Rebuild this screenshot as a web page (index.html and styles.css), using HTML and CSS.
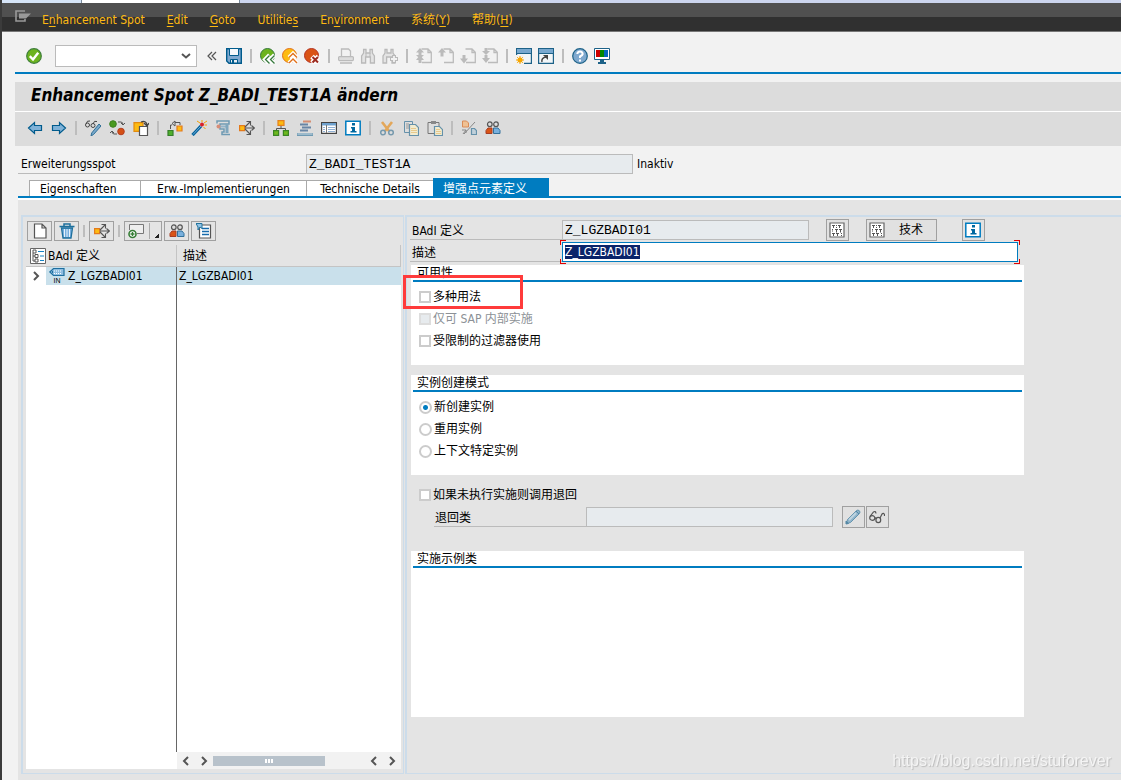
FILE: index.html
```html
<!DOCTYPE html>
<html lang="zh">
<head>
<meta charset="utf-8">
<title>Enhancement Spot Z_BADI_TEST1A ändern</title>
<link rel="stylesheet" href="styles.css">
</head>
<body>
<svg class="sprite" aria-hidden="true">
  <symbol id="ok" viewBox="0 0 16 16"><circle cx="8" cy="8" r="7.3" fill="#6cb31f" stroke="#3f7f3a" stroke-width="1.2"/><path d="M3.8 8.2 7 11.5 12.2 4.8" fill="none" stroke="#fff" stroke-width="2.4"/></symbol>
  <symbol id="save" viewBox="0 0 16 16"><path d="M.7.7h14.6v14.6H3L.7 13z" fill="#7fa9d0" stroke="#005b8c" stroke-width="1.4"/><path d="M3.500.5h9v7h-9z" fill="#f4f8fb" stroke="#005b8c"/><path d="M4.500 11.500h7V15h-7z" fill="#e8eef3" stroke="#005b8c"/><path d="M6 12h2v3H6z" fill="#005b8c"/></symbol>
  <symbol id="back" viewBox="0 0 16 16"><circle cx="7.500" cy="7.500" r="7" fill="#6cb31f" stroke="#35783c"/><path d="M9.500 7 5 11.500 9.500 16M14.500 7 10 11.500l4.500 4.500" fill="none" stroke="#fff" stroke-width="4"/><path d="M9.500 7.500l-4 4 4 4M14.500 7.500l-4 4 4 4" fill="none" stroke="#35783c" stroke-width="1.300"/></symbol>
  <symbol id="exit" viewBox="0 0 16 16"><circle cx="7.500" cy="7.500" r="7" fill="#fdbb12" stroke="#e0701a"/><path d="m7 9.500 4-4 4 4M7 15l4-4 4 4" fill="none" stroke="#fff" stroke-width="4"/><path d="m7 9.500 4-4 4 4M7 15l4-4 4 4" fill="none" stroke="#e0701a" stroke-width="1.400"/></symbol>
  <symbol id="cancel" viewBox="0 0 16 16"><circle cx="7.500" cy="7.500" r="7" fill="#da5416" stroke="#b53322"/><path d="m8 8.500 6.500 6.500M14.500 8.500 8 15" stroke="#fff" stroke-width="5"/><path d="m8.500 9 5.500 5.500M14 9l-5.500 5.500" stroke="#9d2b20" stroke-width="2"/></symbol>
  <symbol id="print" viewBox="0 0 16 16"><path d="M3.500 8V1h7l2 2v5" fill="#f2f2f2" stroke="#bbb" stroke-width="1.300"/><rect x=".6" y="8.600" width="14.800" height="4" rx="1" fill="#ddd" stroke="#bbb" stroke-width="1.200"/><path d="M2 15h12" stroke="#bbb" stroke-width="1.600"/></symbol>
  <symbol id="find" viewBox="0 0 16 16"><path d="M1.600 15V8l2-3V1.500H6V5h4V1.500h2.400V5l2 3v7h-4V9H5.600v6z" fill="#e4e4e4" stroke="#b9b9b9" stroke-width="1.300"/><path d="M6 5v4m4-4v4" stroke="#b9b9b9"/></symbol>
  <symbol id="findnext" viewBox="0 0 16 16"><path d="M1 15V8l2-3V1.500h2V5h4V1.500h2V5l2 3v7h-3V9H4.600v6z" fill="#e4e4e4" stroke="#b9b9b9" stroke-width="1.300"/><path d="M12 7v8M8 11h8" stroke="#b9b9b9" stroke-width="4"/><path d="M12 8v6M9 11h6" stroke="#f2f2f2" stroke-width="1.800"/></symbol>
  <symbol id="page" viewBox="0 0 16 16"><path d="M5.500 1H12l3.300 3.300v10.200H6M12 1v3.500h3" fill="none" stroke="#bbb" stroke-width="1.300"/></symbol>
  <symbol id="first" viewBox="0 0 16 16"><use href="#page"/><path d="m4 0 4 4.500H5.500V7H8l-4 4-4-4h2.500V4.500H0zM4 7l4 5H5.500v3h-3v-3H0z" fill="#bbb"/></symbol>
  <symbol id="prev" viewBox="0 0 16 16"><use href="#page"/><path d="m4 0 4 4.500H5.500v4h-3v-4H0z" fill="#bbb"/></symbol>
  <symbol id="next" viewBox="0 0 16 16"><use href="#page"/><path d="m4 15.500 4-5H5.500V7h-3v3.500H0z" fill="#bbb"/></symbol>
  <symbol id="last" viewBox="0 0 16 16"><use href="#page"/><path d="m4 7 4-4H5.500V0h-3v3H0zM4 15l4-5H5.500V7h-3v3H0z" fill="#bbb"/></symbol>
  <symbol id="session" viewBox="0 0 16 16"><path d="M.6.6h14.800v14.800H.6z" fill="#f2f6f8" stroke="#1d6288" stroke-width="1.200"/><path d="M1 1h14v4H1z" fill="#78a8cf"/><path d="M0 5.500h16" stroke="#1d6288"/><path d="M0 7h8v9H0z" fill="#f2f2f2"/><circle cx="4" cy="12" r="2.500" fill="#f7a600"/><path d="M4 8v8M0 12h8M1.200 9.200l5.600 5.600M6.800 9.200l-5.600 5.600" stroke="#f7a600"/></symbol>
  <symbol id="shortcut" viewBox="0 0 16 16"><path d="M.6.6h14.800v14.800H.6z" fill="#f2f6f8" stroke="#1d6288" stroke-width="1.200"/><path d="M1 1h14v4H1z" fill="#78a8cf"/><path d="M0 5.500h16" stroke="#1d6288"/><path d="M4 14q-1-4 4-5" fill="none" stroke="#444" stroke-width="1.500"/><path d="M5 7h5v5z" fill="#444"/></symbol>
  <symbol id="help" viewBox="0 0 16 16"><circle cx="8" cy="8" r="7.300" fill="#7fa9cf" stroke="#1d6288" stroke-width="1.200"/><path d="M5.300 6q.2-2.600 2.700-2.600T10.700 6Q10.500 7.300 8 8.500V10" fill="none" stroke="#fff" stroke-width="2"/><path d="M7 11.500h2v2H7z" fill="#fff"/></symbol>
  <symbol id="monitor" viewBox="0 0 16 16"><path d="M.5.500h15v11H.5z" fill="#fff" stroke="#1d6288"/><path d="M2 2h4v7H2z" fill="#c00"/><path d="M6 2h4v7H6z" fill="#080"/><path d="M10 2h4v7h-4z" fill="#06b"/><path d="M6 12h4v2h2v2H4v-2h2z" fill="#1d6288"/></symbol>
  <symbol id="left" viewBox="0 0 16 16"><path d="m1.500 8 6-5.500v3h7v5h-7v3z" fill="#7fb2d8" stroke="#005b8c" stroke-width="1.200"/></symbol>
  <symbol id="right" viewBox="0 0 16 16"><path d="m14.500 8-6-5.500v3h-7v5h7v3z" fill="#7fb2d8" stroke="#005b8c" stroke-width="1.200"/></symbol>
  <symbol id="toggle" viewBox="0 0 16 16"><circle cx="2.500" cy="5" r="2" fill="none" stroke="#444"/><circle cx="8" cy="5.500" r="2" fill="none" stroke="#444"/><path d="M1 4Q2 0 5 1m3 3q1-4 4-2.500" fill="none" stroke="#444"/><path d="m14 4 2 2-7.500 8.500L6 16l.7-3z" fill="#7aa9cb" stroke="#2f6f96"/></symbol>
  <symbol id="activate" viewBox="0 0 16 16"><circle cx="4" cy="4" r="3.300" fill="#4a9a20" stroke="#3d8020"/><circle cx="12" cy="11.500" r="3.300" fill="#d45015" stroke="#b43f22"/><path d="M9 2h3q2 0 2 3m-2-2 2 2 2-2M8 14H5q-2 0-2-3M1 13l2-2 2 2" fill="none" stroke="#555"/></symbol>
  <symbol id="other" viewBox="0 0 16 16"><path d="M1 2.600h9v8.800H1z" fill="#fdbb12" stroke="#e28a10" stroke-width="1.200"/><path d="M6.500 6.500h8v9h-8z" fill="#fff" stroke="#555" stroke-width="1.200"/><path d="M8 2q5-2 6 3m-3-2 3 3 2-3" fill="none" stroke="#444" stroke-width="1.300"/></symbol>
  <symbol id="where" viewBox="0 0 16 16"><path d="M1 10.500h5v5H1z" fill="#4faf2c" stroke="#357d2a" stroke-width="1.200"/><path d="M10 6h5v5h-5z" fill="#fdbb12" stroke="#e37a1c" stroke-width="1.200"/><path d="M3.500 9V5H5M8 2.500h5V5M5 3.500 8 1v5z" fill="none" stroke="#555"/></symbol>
  <symbol id="wand" viewBox="0 0 16 16"><path d="M1.500 15 10 6" stroke="#00609a" stroke-width="3.200"/><path d="m2 14.500 8-8.500" stroke="#79b0d8"/><circle cx="11" cy="4.500" r="2" fill="#d9222a"/><path d="M11 0v2M13 3l3-2M13.500 5H16M12.500 7l2 2M6 1l3 2" stroke="#f6a000"/></symbol>
  <symbol id="pattern" viewBox="0 0 16 16"><path d="M2 3.500V1h12v3H5v5h4v3H7v2.500h8" fill="none" stroke="#6f9ab3" stroke-width="1.500"/><path d="M5 6.500h7" stroke="#92b4c8" stroke-width="2"/><path d="M12 4v9" stroke="#7fa6bd" stroke-width="3"/><circle cx="3.500" cy="6.500" r="2" fill="#d68d78"/></symbol>
  <symbol id="expand" viewBox="0 0 16 16"><path d="M.6 5.600h5v5h-5z" fill="#fdbb12" stroke="#e37a1c" stroke-width="1.200"/><path d="M6 8h9M6 7l5-5M6 9l5 5M12.500 5.500 15.500 8l-3 2.500M7.500 1.500h4v4M7.500 14.500h4v-4" fill="none" stroke="#555" stroke-width="1.100"/></symbol>
  <symbol id="hier" viewBox="0 0 16 16"><path d="M8 6v3M3.500 11V8.500h9V11" fill="none" stroke="#555"/><path d="M5 .6h6v4.800H5z" fill="#fdbb12" stroke="#e5801c" stroke-width="1.200"/><path d="M.6 10.600h5v4.800h-5zM10.400 10.600h5v4.800h-5z" fill="#6eb91e" stroke="#3b8525" stroke-width="1.200"/></symbol>
  <symbol id="stack" viewBox="0 0 16 16"><path d="M6 1.500h8" stroke="#d58e72" stroke-width="2"/><path d="M3 4.500h8M5 7.500h9M3 10.500h8" stroke="#6885a5" stroke-width="2"/><path d="M0 13v2.500h16V13" fill="#9dbacb" stroke="#6f9ab3"/></symbol>
  <symbol id="list" viewBox="0 0 16 16"><path d="M.6 2.600h14.800v10.800H.6z" fill="#fff" stroke="#444" stroke-width="1.200"/><path d="M1 3h14v2.500H1z" fill="#6ea1ce"/><path d="M5.500 5v8" stroke="#777"/><path d="M2 7.500h2m-2 2h2m-2 2h2M7 7.500h7m-7 2h7m-7 2h7" stroke="#8fb0d4"/></symbol>
  <symbol id="info" viewBox="0 0 16 16"><path d="M.8 1.300h14.400v13.400H.8z" fill="#fff" stroke="#007cc0" stroke-width="1.500"/><path d="M7 3h3v2.500H7zM6 7h4v4h1.500v1.600h-6V11H7V8.500H6z" fill="#00689f"/></symbol>
  <symbol id="cut" viewBox="0 0 16 16"><path d="m3 2 7 9M13 2l-7 9" stroke="#e3a75a" stroke-width="2.600"/><circle cx="4" cy="12.500" r="2.300" fill="none" stroke="#7699ad" stroke-width="1.500"/><circle cx="12" cy="12.500" r="2.300" fill="none" stroke="#7699ad" stroke-width="1.500"/></symbol>
  <symbol id="copy" viewBox="0 0 16 16"><path d="M1.500 1.500h8v11h-8z" fill="#ddd" stroke="#6591aa"/><path d="M3 4h3M3 6h3M3 8h3" stroke="#999"/><path d="M6.500 4.500h6l3 3v8h-9z" fill="#f2ecd0" stroke="#6591aa" stroke-width="1.200"/><path d="M8 8.500h5m-5 2h6m-6 2h6" stroke="#e8c98c"/></symbol>
  <symbol id="paste" viewBox="0 0 16 16"><path d="M1 2.500h11v11H1z" fill="#ddd" stroke="#777"/><path d="M4 1h5v3H4z" fill="#888"/><path d="M7.500 6.500h5l3 3v6h-8z" fill="#f2ecd0" stroke="#6591aa" stroke-width="1.200"/><path d="M9 9.500h4m-4 2h5m-5 2h5" stroke="#e8c98c"/></symbol>
  <symbol id="switch" viewBox="0 0 16 16"><path d="M1.500 1h4l2 2v4h-6z" fill="#efc194" stroke="#d98b58"/><path d="M10.500 8.500h3l2 2v4h-5z" fill="#c0d0da" stroke="#6591aa" stroke-width="1.200"/><path d="M14 2 3 14M1 10h4v3M2 14l3-4" fill="none" stroke="#888"/></symbol>
  <symbol id="people" viewBox="0 0 16 16"><path d="M1 13.500V10.500L3 8h4v5.500z" fill="#da5416" stroke="#a63d23"/><path d="M8.500 13.500V8H13l2 2.500v3z" fill="#79b0dd" stroke="#32719b"/><circle cx="4.800" cy="4.200" r="2.300" fill="#ddd" stroke="#555" stroke-width="1.200"/><circle cx="11" cy="4.200" r="2.300" fill="#ddd" stroke="#555" stroke-width="1.200"/></symbol>
  <symbol id="new" viewBox="0 0 16 16"><path d="M2.500 1h7.500l4 4v10H2.500zM10 1v4h4" fill="#fff" stroke="#555" stroke-width="1.200"/></symbol>
  <symbol id="trash" viewBox="0 0 16 16"><path d="M2.500 5h11l-1.500 10H4z" fill="#75aede" stroke="#1d6f9c" stroke-width="1.300"/><path d="M.5 3.500h15M5 3V1h6v2" fill="none" stroke="#1d6f9c" stroke-width="1.500"/><path d="M5.500 6v8M8 6v8m2.500-8v8" stroke="#e6f2fa"/></symbol>
  <symbol id="add" viewBox="0 0 16 16"><path d="M1.500 7V1.500h14v9H9" fill="#eee" stroke="#777"/><circle cx="4.500" cy="11" r="3.500" fill="#fff" stroke="#357d35" stroke-width="1.600"/><path d="M4.500 9v4m-2-2h4" stroke="#357d35" stroke-width="1.400"/></symbol>
  <symbol id="note" viewBox="0 0 16 16"><path d="M3.500 2h11v13h-11z" fill="#fff" stroke="#555" stroke-width="1.200"/><path d="M6 5.500h7m-7 3h7m-7 3h7" stroke="#176bab" stroke-width="1.500"/><path d="M0 .5h6v5L4 4 2 7V4z" fill="#91c3e5" stroke="#23739d"/></symbol>
  <symbol id="tree" viewBox="0 0 16 16"><path d="M.5.500h15v15H.5z" fill="#fff" stroke="#666"/><path d="M3 2h3v3H3zM5 6.500h3v3H5zM5 11h3v3H5zM3 5v8h2M3 8h2" fill="none" stroke="#555"/><path d="M8 3.500h6M10 8h4m-4 4.500h4" stroke="#1683c5"/></symbol>
  <symbol id="tag" viewBox="0 0 16 10"><path d="M.8 5 4.500 1.500H15v7H4.500z" fill="#8ebde0" stroke="#1e6f9f" stroke-width="1.200"/><path d="M5 4h8m-8 2.500h8" stroke="#fff" stroke-dasharray="1 1"/><path d="M3.500 6V4" stroke="#1e6f9f"/></symbol>
  <symbol id="tech" viewBox="0 0 16 16"><path d="M1 1h14v14H1z" fill="#fff" stroke="#666" stroke-width="1.200"/><path d="M3 3.500h3m1 0h1m1 0h3M4.500 3v3m3-1v1M10.500 3v3M3 7.500h1m2 0h3m1 0h3M3.500 8.500v1m4-2v3m4-3v3M3 11.500h3m1 0h3m2 0h1M4.500 12v2m4-2v2m4-1v1" stroke="#555"/></symbol>
  <symbol id="pencil" viewBox="0 0 16 16"><path d="m1.500 14.500 1-4 9-9q1.500-1 2.800.2t.2 2.800l-9 9z" fill="#8fb4cb" stroke="#6594ae"/><path d="m4 11 7-7" stroke="#bfd4e0" stroke-width="2"/><path d="M1 15v-3l2.500 2.500zM11 2l3 3" fill="#5588a5" stroke="#5588a5"/></symbol>
  <symbol id="glasses" viewBox="0 0 16 16"><ellipse cx="3.300" cy="9" rx="2.600" ry="2.300" fill="none" stroke="#555" stroke-width="1.200"/><ellipse cx="9.300" cy="11" rx="2.400" ry="2.600" fill="none" stroke="#555" stroke-width="1.200"/><path d="M5.500 9q1-.5 2 1M1 7.500 4.500 3q2-1.500 2.500 1.500M11 9l2-4q1.500-1.500 2.500.500v1.500" fill="none" stroke="#555" stroke-width="1.200"/></symbol>
  <symbol id="lt" viewBox="0 0 8 10"><path d="M6 1 2 5l4 4" fill="none" stroke="#555" stroke-width="2"/></symbol>
  <symbol id="gt" viewBox="0 0 8 10"><path d="m2 1 4 4-4 4" fill="none" stroke="#555" stroke-width="2"/></symbol>
</svg>

<div class="window-edge"><span></span><span></span></div>
<nav class="menu">
  <button class="menu-icon" aria-label="Menu"><svg viewBox="0 0 16 12"><path d="M10 1H1v10h9V9" fill="none" stroke="#999" stroke-width="1.600"/><path d="M4 3.500h12l-5 5H4z" fill="#999"/></svg></button>
  <button>E<u>n</u>hancement Spot</button>
  <button><u>E</u>dit</button>
  <button><u>G</u>oto</button>
  <button>Utilitie<u>s</u></button>
  <button>En<u>v</u>ironment</button>
  <button>系统(<u>Y</u>)</button>
  <button>帮助(<u>H</u>)</button>
</nav>

<div class="app">
  <div class="toolbar main-bar">
    <button class="ok" aria-label="OK"><svg><use href="#ok"/></svg></button>
    <div class="command">
      <select aria-label="Command"><option></option></select>
      <svg viewBox="0 0 10 6"><path d="m1 1 4 3.500L9 1" fill="none" stroke="#555" stroke-width="2"/></svg>
    </div>
    <button class="collapse" aria-label="Collapse"><svg viewBox="0 0 10 10"><path d="M5 1 1 5l4 4M9 1 5 5l4 4" fill="none" stroke="#555" stroke-width="1.200"/></svg></button>
    <button aria-label="Save"><svg><use href="#save"/></svg></button>
    <i class="sep"></i>
    <button aria-label="Back"><svg><use href="#back"/></svg></button>
    <button aria-label="Exit"><svg><use href="#exit"/></svg></button>
    <button aria-label="Cancel"><svg><use href="#cancel"/></svg></button>
    <i class="sep"></i>
    <button aria-label="Print"><svg><use href="#print"/></svg></button>
    <button aria-label="Find"><svg><use href="#find"/></svg></button>
    <button aria-label="Find next"><svg><use href="#findnext"/></svg></button>
    <i class="sep"></i>
    <button aria-label="First page"><svg><use href="#first"/></svg></button>
    <button aria-label="Previous page"><svg><use href="#prev"/></svg></button>
    <button aria-label="Next page"><svg><use href="#next"/></svg></button>
    <button aria-label="Last page"><svg><use href="#last"/></svg></button>
    <i class="sep"></i>
    <button aria-label="New session"><svg><use href="#session"/></svg></button>
    <button aria-label="Shortcut"><svg><use href="#shortcut"/></svg></button>
    <i class="sep"></i>
    <button aria-label="Help"><svg><use href="#help"/></svg></button>
    <button aria-label="Layout"><svg><use href="#monitor"/></svg></button>
  </div>

  <h1>Enhancement Spot Z_BADI_TEST1A ändern</h1>

  <div class="toolbar app-bar">
    <button aria-label="Previous object"><svg><use href="#left"/></svg></button>
    <button aria-label="Next object"><svg><use href="#right"/></svg></button>
    <i class="sep"></i>
    <button aria-label="Display/Change"><svg><use href="#toggle"/></svg></button>
    <button aria-label="Active/Inactive"><svg><use href="#activate"/></svg></button>
    <button aria-label="Other object"><svg><use href="#other"/></svg></button>
    <i class="sep"></i>
    <button aria-label="Check"><svg><use href="#where"/></svg></button>
    <button aria-label="Activate"><svg><use href="#wand"/></svg></button>
    <button aria-label="Test"><svg><use href="#pattern"/></svg></button>
    <button aria-label="Where-used list"><svg><use href="#expand"/></svg></button>
    <i class="sep"></i>
    <button aria-label="Object list"><svg><use href="#hier"/></svg></button>
    <button aria-label="Navigation window"><svg><use href="#stack"/></svg></button>
    <button aria-label="Full screen"><svg><use href="#list"/></svg></button>
    <button aria-label="Information"><svg><use href="#info"/></svg></button>
    <i class="sep"></i>
    <button aria-label="Cut"><svg><use href="#cut"/></svg></button>
    <button aria-label="Copy"><svg><use href="#copy"/></svg></button>
    <button aria-label="Paste"><svg><use href="#paste"/></svg></button>
    <i class="sep"></i>
    <button aria-label="Switch"><svg><use href="#switch"/></svg></button>
    <button aria-label="Users"><svg><use href="#people"/></svg></button>
  </div>

  <main>
    <div class="field spot">
      <label for="spot">Erweiterungsspot</label>
      <input id="spot" class="mono" value="Z_BADI_TEST1A" readonly>
      <span class="status">Inaktiv</span>
    </div>

    <div class="tabs" role="tablist">
      <button role="tab">Eigenschaften</button>
      <button role="tab">Erw.-Implementierungen</button>
      <button role="tab">Technische Details</button>
      <button role="tab" class="active" aria-selected="true">增强点元素定义</button>
    </div>

    <div class="body">
      <section class="left">
        <div class="buttons">
          <button aria-label="Create"><svg><use href="#new"/></svg></button>
          <button aria-label="Delete"><svg><use href="#trash"/></svg></button>
          <i class="sep"></i>
          <button aria-label="Where used"><svg><use href="#expand"/></svg></button>
          <i class="sep"></i>
          <button class="split" aria-label="Add"><svg><use href="#add"/></svg><i class="corner"></i></button>
          <button aria-label="Users"><svg><use href="#people"/></svg></button>
          <button aria-label="Documentation"><svg><use href="#note"/></svg></button>
        </div>
        <table>
          <thead><tr>
            <th class="c1"><div class="cell"><svg><use href="#tree"/></svg>BAdI 定义</div></th>
            <th>描述</th>
          </tr></thead>
          <tbody><tr>
            <td class="c1"><div class="cell"><button class="expander" aria-label="Expand"><svg><use href="#gt"/></svg></button><span class="node"><span class="tag"><svg><use href="#tag"/></svg><small>IN</small></span>Z_LGZBADI01</span></div></td>
            <td>Z_LGZBADI01</td>
          </tr></tbody>
        </table>
        <div class="blank"></div>
        <div class="scroll">
          <button aria-label="Left"><svg><use href="#lt"/></svg></button>
          <button aria-label="Right"><svg><use href="#gt"/></svg></button>
          <div class="thumb"><i></i><i></i><i></i></div>
          <button aria-label="Left"><svg><use href="#lt"/></svg></button>
          <button aria-label="Right"><svg><use href="#gt"/></svg></button>
        </div>
      </section>

      <section class="right">
        <div class="row">
          <div class="field"><label for="badi">BAdI 定义</label><input id="badi" class="mono" value="Z_LGZBADI01" readonly></div>
          <div class="row-actions">
            <button class="box" aria-label="Technical"><svg><use href="#tech"/></svg></button>
            <button class="box wide"><svg><use href="#tech"/></svg><span>技术</span></button>
            <button class="box" aria-label="Information"><svg><use href="#info"/></svg></button>
          </div>
        </div>
        <div class="field desc"><label for="desc">描述</label><div class="focus"><input id="desc" value="Z_LGZBADI01"><i></i><i></i><i></i><i></i></div></div>

        <fieldset class="usage">
          <legend>可用性</legend>
          <label><input type="checkbox">多种用法</label>
          <label class="off"><input type="checkbox" disabled>仅可 SAP 内部实施</label>
          <label><input type="checkbox">受限制的过滤器使用</label>
          <div class="mark"></div>
        </fieldset>

        <fieldset class="mode">
          <legend>实例创建模式</legend>
          <label><input type="radio" name="mode" checked>新创建实例</label>
          <label><input type="radio" name="mode">重用实例</label>
          <label><input type="radio" name="mode">上下文特定实例</label>
        </fieldset>

        <div class="fallback">
          <label class="check"><input type="checkbox">如果未执行实施则调用退回</label>
          <div class="row">
            <div class="field"><label for="fb">退回类</label><input id="fb" readonly></div>
            <div class="pair">
              <button class="box" aria-label="Edit"><svg><use href="#pencil"/></svg></button>
              <button class="box" aria-label="Display"><svg><use href="#glasses"/></svg></button>
            </div>
          </div>
        </div>

        <fieldset class="samples">
          <legend>实施示例类</legend>
        </fieldset>
      </section>
    </div>
  </main>
</div>
<div class="watermark">https://blog.csdn.net/stuforever</div>
<script src="main.js"></script>
</body>
</html>
```
FILE: main.js
```js
const desc = document.getElementById('desc');
desc.focus({ preventScroll: true });
desc.select();
```
FILE: styles.css
```css
* { box-sizing: border-box; }
body {
  margin: 0;
  min-height: 100vh;
  display: flex;
  flex-direction: column;
  border-left: 2px solid #3b3b3b;
  background: #f2f2f2;
  color: #000;
  font: 12px/18px "DejaVu Sans Condensed", "Noto Sans CJK SC", sans-serif;
}
button, input, select { font: inherit; color: inherit; margin: 0; padding: 0; border: 0; border-radius: 0; }
button { background: none; }
svg { display: block; width: 16px; height: 16px; flex: none; }
.sprite { position: absolute; width: 0; height: 0; }

.window-edge { display: flex; height: 3px; background: #ccd5ee; }
.window-edge span { width: 80px; background: #d5e4f7; border-right: 1px solid #789; }
.window-edge span + span { width: 158px; background: #fff; }

.menu {
  display: flex;
  gap: 22px;
  height: 29px;
  padding: 0 13px;
  align-items: center;
  background: linear-gradient(#505050 0 14px, #303030 14px 28px, #777 28px);
  color: #fdb913;
}
.menu button { line-height: 27px; padding-top: 6px; }
.menu .menu-icon { width: 16px; height: 29px; padding: 7px 0 0; margin-right: -11px; }
.menu .menu-icon svg { width: 16px; height: 12px; }
.menu .menu-icon { display: flex; align-items: flex-start; }
.menu u { text-underline-offset: 2px; }

.app { flex: 1; display: flex; flex-direction: column; padding-left: 13px; }
.toolbar { display: flex; align-items: center; }
.toolbar button { width: 16px; height: 16px; }
.sep { width: 2px; height: 14px; background: #bdbdbd; }
.main-bar { gap: 6px; height: 42px; padding: 8px 0 0 11px; border-bottom: 2px solid #007cc0; }
.main-bar .sep { margin: 0 2px; }
.main-bar .ok { margin-right: 7px; }
.command { position: relative; width: 142px; height: 22px; }
.command select { appearance: none; display: block; width: 100%; height: 100%; border: 1px solid #bbb; background: #fff; }
.command svg { position: absolute; right: 6px; top: 8px; width: 10px; height: 6px; pointer-events: none; }
.main-bar .collapse { width: 10px; margin: 0 3px 0 4px; }
.collapse svg { width: 10px; }

h1 {
  margin: 8px 0 1px;
  height: 29px;
  padding-left: 16px;
  background: #dcdcdc;
  font-size: 17px;
  line-height: 27px;
  font-style: italic;
  font-weight: bold;
}
.app-bar { gap: 8px; height: 34px; padding: 0 12px 2px; background: #dcdcdc; box-shadow: 0 -1px #fff; }

main { flex: 1; display: flex; flex-direction: column; padding: 8px 0 0 3px; }
.field { display: flex; height: 20px; }
.field > label { border-bottom: 1px solid #bbb; line-height: 21px; }
.field input { border: 1px solid #bbb; background: #e7ebee; height: 20px; padding: 0 2px; outline: 0; min-width: 0; }
.field .mono { font: 13px "Liberation Mono", monospace; }
.spot label { width: 288px; padding-left: 3px; }
.spot input { width: 327px; }
.status { line-height: 21px; padding-left: 4px; }

.tabs { display: flex; align-items: flex-end; margin-top: 4px; height: 20px; padding-left: 11px; border-bottom: 2px solid #007cc0; }
.tabs button { height: 16px; line-height: 16px; background: #fff; border: 1px solid #aaa; border-width: 1px 0 0 1px; padding: 0 11px; }
.tabs button:first-child { width: 111px; text-align: left; padding: 0 10px; }
.tabs button:nth-child(2) { width: 166px; }
.tabs button:nth-child(3) { width: 127px; }
.tabs .active { width: 116px; height: 18px; line-height: 18px; background: #007cc0; border: 0; color: #fff; text-align: left; padding: 2px 10px 0; }

.body { flex: 1; display: flex; background: #e4e4e4; border-top: 2px solid #fff; padding: 15px 0 6px 3px; }
.left { width: 383px; flex: none; display: flex; flex-direction: column; border: solid #ccdcea; border-width: 2px 1px 1px 2px; padding: 4px 2px 4px 3px; }
.right { flex: 1; min-width: 0; border: solid #ccdcea; border-width: 2px 0 1px 2px; margin-left: 1px; padding: 2px 0 0 3px; }

.buttons { display: flex; gap: 2px; padding-left: 1px; align-items: center; }
.buttons button { width: 25px; height: 20px; border: 1px solid #a0a0a0; display: flex; align-items: center; justify-content: center; }
.buttons .sep { margin: 0 2px; height: 12px; }
.buttons .split { width: 38px; justify-content: flex-start; padding-left: 3px; }
.corner { width: 13px; height: 16px; margin-left: 5px; border-left: 1px solid #aaa; background: linear-gradient(135deg, transparent 50%, #222 50%) 4px 10px / 5px 5px no-repeat; }

table { width: 100%; border-spacing: 0; table-layout: fixed; margin-top: 4px; }
th, td { padding: 0 0 0 6px; text-align: left; font-weight: normal; }
th { height: 22px; border-right: 1px solid #c4c4c4; border-bottom: 1px solid #c4c4c4; }
td { height: 18px; padding-left: 2px; background: #c9e0eb; }
.c1 { width: 151px; padding: 0; }
th.c1 { padding-left: 4px; }
td.c1 { border-right: 1px solid #666; }
.cell { display: flex; align-items: center; gap: 2px; height: 18px; }
td .cell { gap: 3px; background: linear-gradient(90deg, #fff 20px, transparent 20px); }
.expander { width: 20px; height: 18px; display: flex; align-items: center; justify-content: center; }
.expander svg { width: 8px; height: 10px; }
.node { display: flex; gap: 3px; }
.tag { display: flex; flex-direction: column; align-items: center; width: 16px; height: 18px; }
.tag svg { height: 10px; width: 16px; }
.tag small { font: 7px/7px "Liberation Sans", sans-serif; }
.blank { flex: 1; background: linear-gradient(90deg, #fff 150px, #666 150px 151px, #fff 151px); }
.scroll { display: flex; align-items: center; height: 17px; padding-left: 151px; background: linear-gradient(90deg, #fff 151px, #f2f2f2 151px); }
.scroll button { width: 18px; height: 17px; display: flex; align-items: center; justify-content: center; }
.scroll svg { width: 8px; height: 10px; }
.thumb { width: 112px; height: 10px; margin: 0 auto 0 0; background: #b8c2cb; display: flex; gap: 1px; align-items: center; justify-content: center; }
.thumb i { width: 2px; height: 4px; background: #fff; }

.row { display: flex; align-items: center; height: 22px; }
.right .field label { width: 152px; padding-left: 2px; line-height: 22px; }
.row .field input { width: 247px; }
.row-actions { display: flex; margin-left: 17px; }
.box { width: 23px; height: 22px; border: 1px solid #a0a0a0; display: flex; align-items: center; padding-left: 2px; background: #e1e1e1; }
.row-actions .wide { width: 71px; margin: 0 25px 0 17px; gap: 14px; }
.desc { margin-top: 1px; }
.focus { position: relative; flex: 1; max-width: 456px; }
.focus input { width: 100%; border-color: #007cc0; background: #fff; display: block; }
.focus input::selection { background: #0a246a; color: #fff; }
.focus i { position: absolute; width: 6px; height: 5px; border: 0 solid #e00000; }
.focus i:nth-of-type(1) { left: -2px; top: -2px; border-width: 1px 0 0 1px; }
.focus i:nth-of-type(2) { right: -2px; top: -2px; border-width: 1px 1px 0 0; }
.focus i:nth-of-type(3) { left: -2px; bottom: -2px; border-width: 0 0 1px 1px; }
.focus i:nth-of-type(4) { right: -2px; bottom: -2px; border-width: 0 1px 1px 0; }

fieldset { position: relative; margin: 3px 0 0 1px; border: 0; padding: 0 2px; max-width: 613px; min-width: 0; height: 100px; background: #fff; }
legend { float: left; width: 100%; height: 17px; padding: 0 0 0 4px; border-bottom: 2px solid #007cc0; line-height: 17px; margin-bottom: 4px; }
fieldset label { clear: both; }
fieldset label, .check { display: flex; align-items: center; height: 22px; padding-left: 6px; gap: 2px; }
.off { color: #8c9196; }
.mode { margin-top: 10px; }
input[type="checkbox"], input[type="radio"] { appearance: none; width: 12px; height: 12px; border: 2px solid #ccc; background: #fff; flex: none; }
input[type="checkbox"]:disabled { background: #e7ebee; border-color: #ddd; }
input[type="radio"] { width: 13px; height: 13px; border-radius: 50%; }
input[type="radio"]:checked { background: radial-gradient(circle, #007cc0 2px, #fff 3px); }
.mark { position: absolute; left: -8px; top: 10px; width: 120px; height: 34px; border: 3px solid #ff3b3b; }
.fallback { margin: 9px 0 0 1px; }
.fallback .check { padding-left: 8px; }
.fallback .row { padding-left: 23px; }
.fallback .row .field label { padding-left: 1px; }
.pair { display: flex; gap: 1px; margin-left: 9px; }
.samples { margin-top: 23px; height: 166px; }

.watermark { position: fixed; right: 10px; bottom: 9px; color: #f4f4f4; text-shadow: 1px 1px 1px #bbb; font: 16px/20px "Liberation Sans", sans-serif; }
```
